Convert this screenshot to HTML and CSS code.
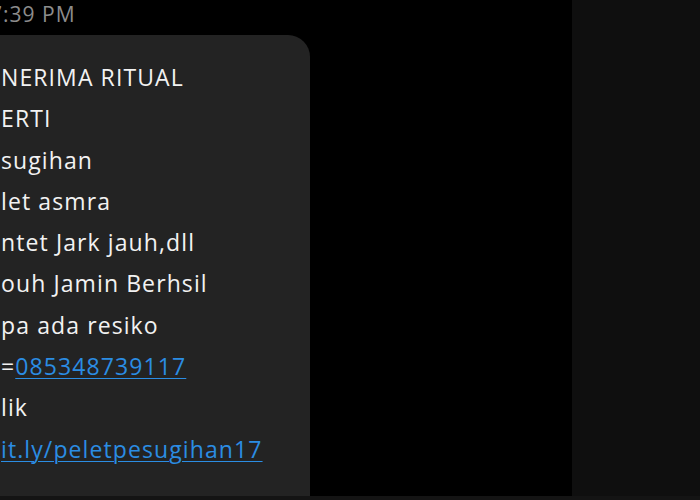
FILE: index.html
```html
<!DOCTYPE html>
<html>
  <head>
    <meta charset="utf-8" />
    <meta name="viewport" content="width=device-width, initial-scale=1.0" />
    <title>Chat</title>
    <link rel="stylesheet" href="styles.css">
  </head>
  <body>
    <div class="screen">
      <div class="chat">
        <div class="time">7:39 PM</div>
        <div class="bubble">
          <div class="line">NERIMA RITUAL</div>
          <div class="line">ERTI</div>
          <div class="line">sugihan</div>
          <div class="line">let asmra</div>
          <div class="line">ntet Jark jauh,dll</div>
          <div class="line">ouh Jamin Berhsil</div>
          <div class="line">pa ada resiko</div>
          <div class="line">=<a href="#">085348739117</a></div>
          <div class="line">lik</div>
          <div class="line"><a href="#">it.ly/peletpesugihan17</a></div>
        </div>
      </div>
      <div class="side"></div>
    </div>
    <div class="bottom-strip"></div>
  </body>
</html>
```

FILE: styles.css
```css
html,
body {
  margin: 0;
  padding: 0;
  height: 100%;
  overflow: hidden;
  background: #000;
}

body {
  display: flex;
  flex-direction: column;
  font-family: "Open Sans", "Liberation Sans", sans-serif;
}

.screen {
  display: flex;
  height: 496px;
}

.chat {
  width: 572px;
  background: #000;
  display: flex;
  flex-direction: column;
  overflow: hidden;
}

.side {
  flex: 1;
  background: #0f0f0f;
}

.bottom-strip {
  height: 4px;
  background: #141414;
}

.time {
  height: 35px;
  margin-left: -10px;
  font-size: 21px;
  letter-spacing: 1px;
  line-height: 29px;
  color: #8c8c8c;
}

.bubble {
  flex: 1;
  width: 310px;
  box-sizing: border-box;
  background: #232323;
  border-top-right-radius: 22px;
  padding: 22px 0 0 1px;
  color: #f2f2f2;
  font-size: 23px;
  letter-spacing: 1.1px;
  line-height: 41.3px;
  white-space: nowrap;
}

.line a {
  color: #2b8de3;
  text-decoration: underline;
  text-decoration-thickness: 1px;
  text-underline-offset: 3px;
}
```
